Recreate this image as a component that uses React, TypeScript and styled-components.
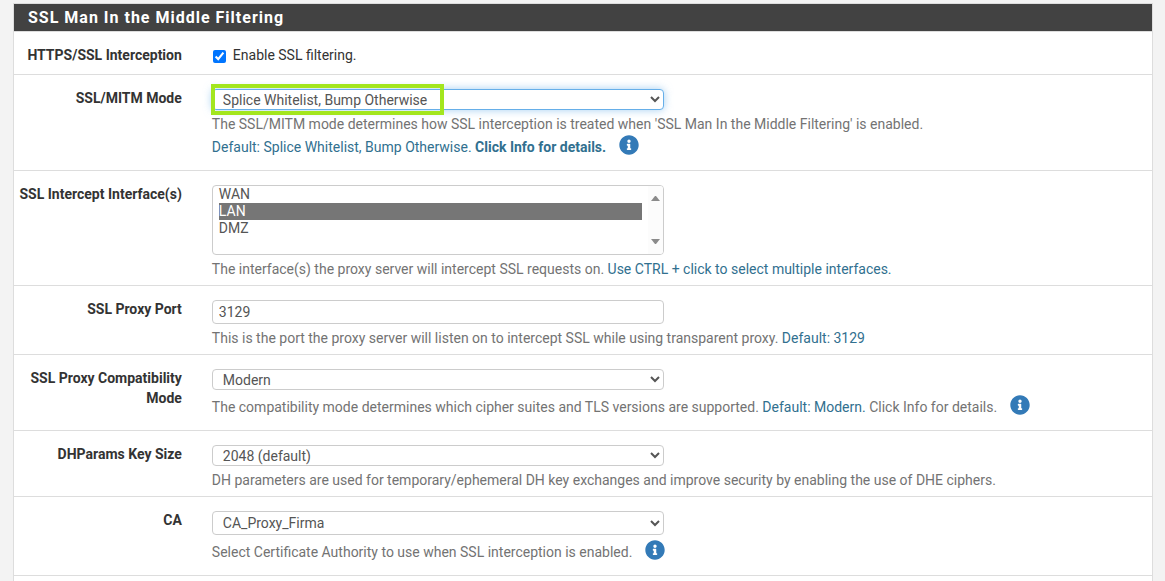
import React from "react";
import styled, { createGlobalStyle, css } from "styled-components";
import { FaInfoCircle } from "react-icons/fa";

const GlobalStyle = createGlobalStyle`
  *, *::before, *::after { box-sizing: border-box; }
  body {
    margin: 0;
    background: #f3f3f3;
    color: #333;
    font: 14px/20px Roboto, "Liberation Sans", sans-serif;
  }
`;

const Page = styled.main`
  padding: 3px 12px 0 13px;
`;

const Panel = styled.section`
  background: #fff;
  border: 1px solid #ddd;
  overflow: hidden;
`;

const PanelTitle = styled.h2`
  margin: 0;
  padding: 4px 14px 3px;
  background: #424242;
  border-bottom: 1px solid #ddd;
  color: #fff;
  font-size: 16px;
  font-weight: 700;
  letter-spacing: 1px;
`;

const Row = styled.div`
  display: flex;
  padding-top: 13px;
  margin: 0 -9px 0 -10px;
  border-bottom: 1px solid #ddd;
`;

const rowLabel = css`
  flex: none;
  width: 16.6667%;
  padding: 0 15px;
  font-weight: 700;
  text-align: right;
`;

const RowLabel = styled.label`
  ${rowLabel}
`;

const RowCaption = styled.span`
  ${rowLabel}
`;

const Content = styled.div`
  flex: 1;
  padding: 1px 15px 6px;
`;

const CheckContent = styled.div`
  flex: 1;
  padding: 0 15px 9px;
`;

const CheckLabel = styled.label`
  display: flex;
  align-items: center;
  gap: 7px;

  input {
    width: 13px;
    height: 13px;
    margin: 2px 0 0 1px;
  }
`;

const Field = styled.div`
  position: relative;
  width: 50%;
  min-width: 240px;
  max-width: 452px;
  margin-bottom: 4px;
`;

const control = css`
  display: block;
  width: 100%;
  border: 1px solid #ccc;
  border-radius: 4px;
  background: #fff;
  color: #555;
  font: 14px Roboto, "Liberation Sans", sans-serif;
  outline: none;
`;

const Select = styled.select<{ $tall?: boolean; $active?: boolean }>`
  ${control}
  height: ${(p) => (p.$tall ? 24 : 21)}px;
  padding: 0 0 0 6px;
  ${(p) =>
    p.$active &&
    css`
      border-color: #66afe9;
      box-shadow: 0 0 8px rgba(102, 175, 233, 0.6);
    `}
`;

const TextInput = styled.input`
  ${control}
  height: 24px;
  padding: 0 6px;
`;

const ListBox = styled.select`
  ${control}
  height: 70px;
  padding: 0 21px 0 6px;
  scrollbar-width: none;

  option {
    min-height: 17px;
    padding: 0;
  }

  option:checked {
    background: #767676 linear-gradient(#767676, #767676);
    color: #fff;
  }
`;

const ScrollTrack = styled.span`
  position: absolute;
  top: 1px;
  right: 1px;
  bottom: 1px;
  width: 15px;
  display: flex;
  flex-direction: column;
  align-items: center;
  justify-content: space-between;
  padding: 10px 0;
  border-radius: 0 3px 3px 0;
  background: #fcfcfc;
  pointer-events: none;

  svg {
    width: 9px;
    height: 5px;
    fill: #8b8b8b;
  }
`;

const Highlight = styled.span`
  position: absolute;
  top: -5px;
  left: -1px;
  width: 233px;
  height: 31px;
  border: 4px solid #a3e61e;
  pointer-events: none;
`;

const Help = styled.p`
  margin: 0;
  color: #737373;
`;

const InfoHelp = styled(Help)`
  display: flex;
  align-items: flex-start;
  gap: 13px;
  padding-bottom: 7px;

  > span {
    padding-top: 3px;
  }
`;

const Info = styled.span`
  color: #31708f;
`;

const InfoButton = styled.button`
  flex: none;
  display: flex;
  margin: 0;
  padding: 1px 0 0;
  border: 0;
  background: none;
  color: #337ab7;
  cursor: pointer;

  svg {
    width: 20px;
    height: 20px;
  }
`;

function InfoToggle() {
  return (
    <InfoButton type="button" aria-label="Info">
      <FaInfoCircle />
    </InfoButton>
  );
}

export default function App() {
  return (
    <>
      <GlobalStyle />
      <Page>
        <Panel>
          <PanelTitle>SSL Man In the Middle Filtering</PanelTitle>

          <Row>
            <RowCaption>HTTPS/SSL Interception</RowCaption>
            <CheckContent>
              <CheckLabel>
                <input type="checkbox" defaultChecked />
                Enable SSL filtering.
              </CheckLabel>
            </CheckContent>
          </Row>

          <Row>
            <RowLabel htmlFor="mode">SSL/MITM Mode</RowLabel>
            <Content>
              <Field>
                <Select id="mode" $active>
                  <option>Splice Whitelist, Bump Otherwise</option>
                </Select>
                <Highlight />
              </Field>
              <Help>
                The SSL/MITM mode determines how SSL interception is treated when 'SSL Man In the
                Middle Filtering' is enabled.
              </Help>
              <InfoHelp as="div">
                <Info>
                  Default: Splice Whitelist, Bump Otherwise. <b>Click Info for details.</b>
                </Info>
                <InfoToggle />
              </InfoHelp>
            </Content>
          </Row>

          <Row>
            <RowLabel htmlFor="interfaces">SSL Intercept Interface(s)</RowLabel>
            <Content>
              <Field>
                <ListBox id="interfaces" multiple defaultValue={["LAN"]}>
                  <option>WAN</option>
                  <option>LAN</option>
                  <option>DMZ</option>
                </ListBox>
                <ScrollTrack aria-hidden="true">
                  <svg viewBox="0 0 9 5">
                    <path d="M0 5L4 0h1l4 5z" />
                  </svg>
                  <svg viewBox="0 0 9 5">
                    <path d="M0 0h9L5 5H4z" />
                  </svg>
                </ScrollTrack>
              </Field>
              <Help>
                The interface(s) the proxy server will intercept SSL requests on.{" "}
                <Info>Use CTRL + click to select multiple interfaces.</Info>
              </Help>
            </Content>
          </Row>

          <Row>
            <RowLabel htmlFor="port">SSL Proxy Port</RowLabel>
            <Content>
              <Field>
                <TextInput id="port" type="text" defaultValue="3129" />
              </Field>
              <Help>
                This is the port the proxy server will listen on to intercept SSL while using
                transparent proxy. <Info>Default: 3129</Info>
              </Help>
            </Content>
          </Row>

          <Row>
            <RowLabel htmlFor="compat">SSL Proxy Compatibility Mode</RowLabel>
            <Content>
              <Field>
                <Select id="compat">
                  <option>Modern</option>
                </Select>
              </Field>
              <InfoHelp as="div">
                <span>
                  The compatibility mode determines which cipher suites and TLS versions are
                  supported. <Info>Default: Modern.</Info> Click Info for details.
                </span>
                <InfoToggle />
              </InfoHelp>
            </Content>
          </Row>

          <Row>
            <RowLabel htmlFor="dhparams">DHParams Key Size</RowLabel>
            <Content>
              <Field>
                <Select id="dhparams">
                  <option>2048 (default)</option>
                </Select>
              </Field>
              <Help>
                DH parameters are used for temporary/ephemeral DH key exchanges and improve security
                by enabling the use of DHE ciphers.
              </Help>
            </Content>
          </Row>

          <Row>
            <RowLabel htmlFor="ca">CA</RowLabel>
            <Content>
              <Field>
                <Select id="ca" $tall>
                  <option>CA_Proxy_Firma</option>
                </Select>
              </Field>
              <InfoHelp as="div">
                <span>Select Certificate Authority to use when SSL interception is enabled.</span>
                <InfoToggle />
              </InfoHelp>
            </Content>
          </Row>

          <Row />
        </Panel>
      </Page>
    </>
  );
}
